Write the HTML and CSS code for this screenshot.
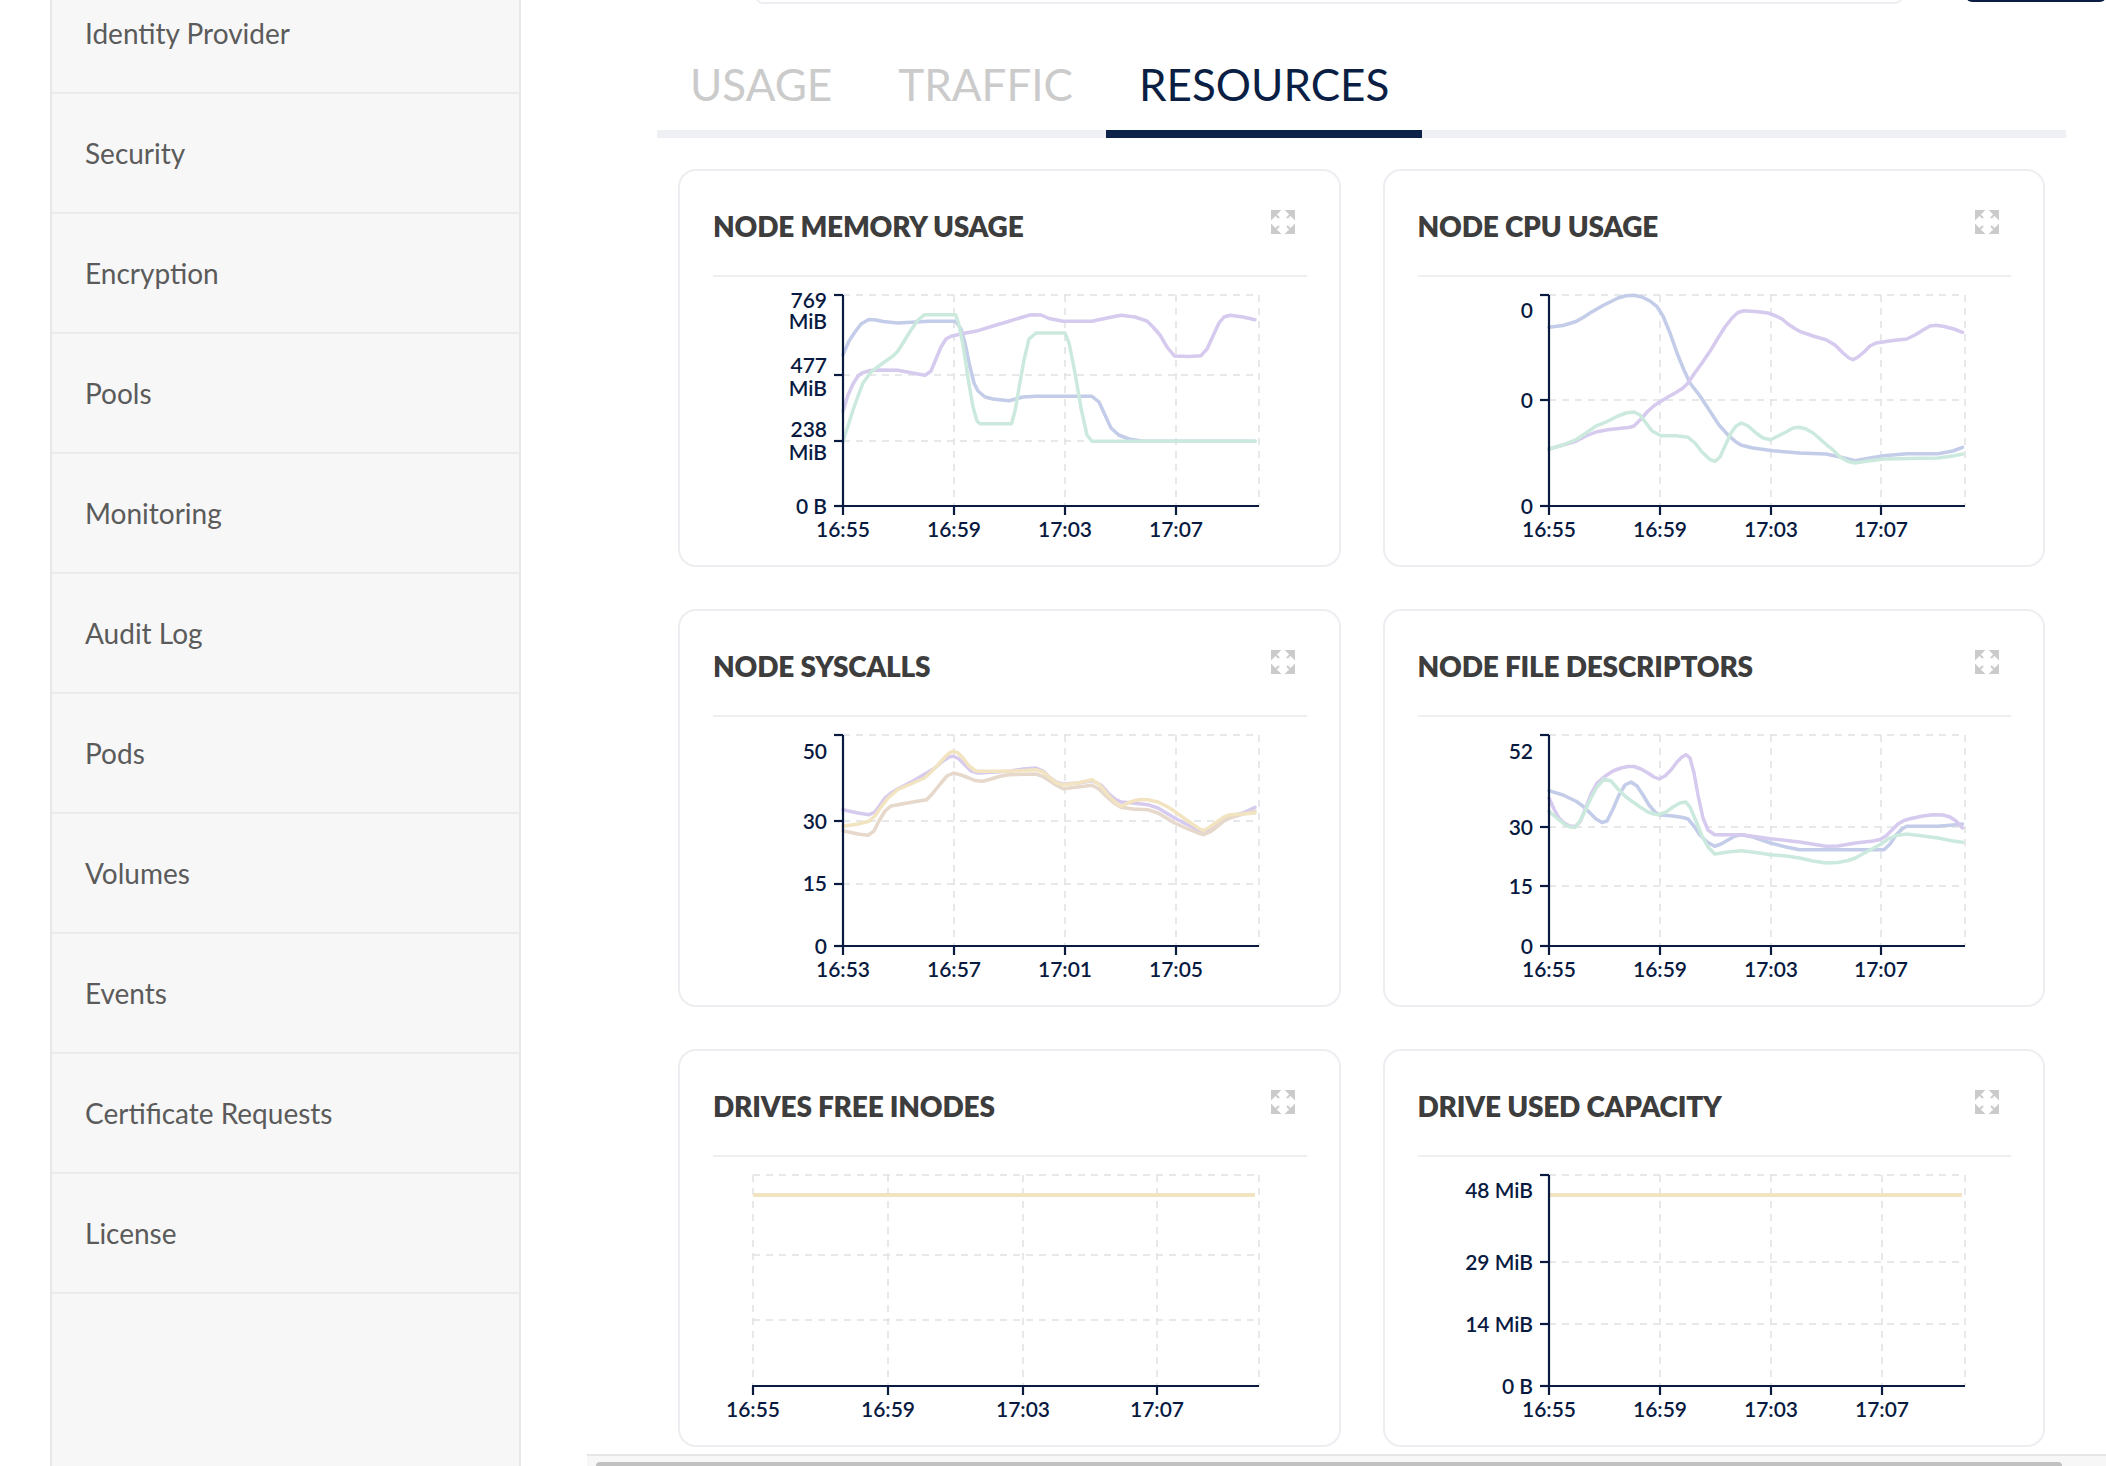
FILE: index.html
```html
<!DOCTYPE html>
<html lang="en">
<head>
<meta charset="utf-8">
<title>Tenant Metrics - Resources</title>
<link rel="stylesheet" href="styles.css">
</head>
<body>
<div class="page">
  <aside class="sidebar">
    <ul class="menu">
      <li class="menu-item">Identity Provider</li>
      <li class="menu-item">Security</li>
      <li class="menu-item">Encryption</li>
      <li class="menu-item">Pools</li>
      <li class="menu-item">Monitoring</li>
      <li class="menu-item">Audit Log</li>
      <li class="menu-item">Pods</li>
      <li class="menu-item">Volumes</li>
      <li class="menu-item">Events</li>
      <li class="menu-item">Certificate Requests</li>
      <li class="menu-item">License</li>
    </ul>
  </aside>

  <main class="main">
    <div class="topbar">
      <div class="search-box"></div>
      <div class="top-button"></div>
    </div>

    <div class="content">
      <nav class="tabs">
        <div class="tab">USAGE</div>
        <div class="tab">TRAFFIC</div>
        <div class="tab active">RESOURCES</div>
      </nav>

      <section class="cards">
        <!-- NODE MEMORY USAGE -->
        <article class="card">
          <header class="card-head">
            <h3 class="card-title">NODE MEMORY USAGE</h3>
            <svg class="expand" viewBox="0 0 24 24"><path d="M1 1h7l-7 7z M3 3l5 5 M23 1h-7l7 7z M21 3l-5 5 M1 23h7l-7-7z M3 21l5-5 M23 23h-7l7-7z M21 21l-5-5"/></svg>
          </header>
          <svg class="chart" viewBox="0 0 593 270">
            <g class="grid">
              <line x1="130" y1="12" x2="546" y2="12"/><line x1="130" y1="92" x2="546" y2="92"/><line x1="130" y1="158" x2="546" y2="158"/>
              <line x1="241" y1="12" x2="241" y2="223"/><line x1="352" y1="12" x2="352" y2="223"/><line x1="463" y1="12" x2="463" y2="223"/><line x1="546" y1="12" x2="546" y2="223"/>
            </g>
            <g class="series">
              <polyline class="s-blue" points="130,71.7 136,58 142,49 148,41 155.7,36.5 163,37 170,38.5 184.7,40 216,38.3 242.7,38.3 248,46 252,60 257,84 261,100 265,108 272,114 280,116 296,117.7 310,114 323,113.3 379,113.3 386,119 392,132 398,145 405.7,152 416,156 430,158.3 542,158.3"/>
              <polyline class="s-lav" points="130,128.3 135,112 140,101 145,93 149,90 157,87.5 165,87 184.7,87.3 205,91 212,92.3 218,88 223,76 228,64 233,56 238,53.3 250,50.5 265,47.7 280,43 296,38.3 310,34 318,31.7 328,32 336,35.5 350,38.3 379,38.3 394,35 408,32.3 422,34 434,38 440,44 447,52 454,64 461.5,73 476,73.5 488,72.7 494,66 500,53 506,40 511,34 517,32.3 530,34 542,36.7"/>
              <polyline class="s-mint" points="130,158.3 135,143 140,127 145,113 150,100 158,89 170,80 180,73 184.7,68.3 190,60 198,47 205,37 211.5,31.7 242.7,31.7 246,42 250,62 255,95 260,124 264,138 267,140.7 298.5,140.7 302,128 306,105 311,77 316,56 323,50 352,50 356,60 362,90 368,125 374,152 379,158.3 542,158.3"/>
            </g>
            <g class="axis">
              <line x1="130" y1="12" x2="130" y2="224"/><line x1="129" y1="223" x2="546" y2="223"/>
              <line x1="121" y1="12" x2="130" y2="12"/><line x1="121" y1="92" x2="130" y2="92"/><line x1="121" y1="158" x2="130" y2="158"/><line x1="121" y1="223" x2="130" y2="223"/>
              <line x1="130" y1="223" x2="130" y2="232"/><line x1="241" y1="223" x2="241" y2="232"/><line x1="352" y1="223" x2="352" y2="232"/><line x1="463" y1="223" x2="463" y2="232"/>
            </g>
            <g class="ylabels">
              <text x="114" y="25">769</text><text x="114" y="46">MiB</text>
              <text x="114" y="89.5">477</text><text x="114" y="112.5">MiB</text>
              <text x="114" y="154">238</text><text x="114" y="177">MiB</text>
              <text x="114" y="230.5">0 B</text>
            </g>
            <g class="xlabels">
              <text x="130" y="254">16:55</text><text x="241" y="254">16:59</text><text x="352" y="254">17:03</text><text x="463" y="254">17:07</text>
            </g>
          </svg>
        </article>

        <!-- NODE CPU USAGE -->
        <article class="card">
          <header class="card-head">
            <h3 class="card-title">NODE CPU USAGE</h3>
            <svg class="expand" viewBox="0 0 24 24"><path d="M1 1h7l-7 7z M3 3l5 5 M23 1h-7l7 7z M21 3l-5 5 M1 23h7l-7-7z M3 21l5-5 M23 23h-7l7-7z M21 21l-5-5"/></svg>
          </header>
          <svg class="chart" viewBox="0 0 593 270">
            <g class="grid">
              <line x1="131" y1="12" x2="547" y2="12"/><line x1="131" y1="117" x2="547" y2="117"/>
              <line x1="242" y1="12" x2="242" y2="223"/><line x1="353" y1="12" x2="353" y2="223"/><line x1="463" y1="12" x2="463" y2="223"/><line x1="547" y1="12" x2="547" y2="223"/>
            </g>
            <g class="series">
              <polyline class="s-blue" points="131,44.3 145,42.5 158,38.5 166,34 172,30 185,22.5 200,15 208,12.8 216,12.3 224,14 232,18 238.7,23.3 245,33 252,50 259,70 265.5,86 272,100 282,113 292,128.3 301,142 310,152 318,159 323.5,162.3 335,165 355,167.7 381.6,170 408,171 422,174 437,177.7 452,175 466,172.7 488.7,170.7 520,170.7 535,168 544.5,164.3"/>
              <polyline class="s-lav" points="131,166 145,162 158,158.3 168,153 178,149 189.6,146.7 205,145 211,144.5 216,143 223,136 230,128 237,122 243,118.3 250,114 258,109.5 265,105 270,100 276,91 284,80 292,68.3 300,55 307,44 314,35 320,29.5 326,27.7 340,28.7 350,30 358,33 364,36 370,41 376,45 381.6,48.3 395,53 408,56.7 417,62 425,70 431,75 435,76.7 440,74 446,69 452,63 458,60 465,59 475,57.5 488.7,56 497,52 505,47 512,43 518,42.3 526,43.5 536,46 544.5,49.3"/>
              <polyline class="s-mint" points="131,166 145,162 158,156.7 168,150 178,143 189.6,138.3 200,133 208,130 216,129 222,132 228,140 234,148 243,152.7 258,152.8 270,154.3 277,160 284,169 292,176.5 297,178.3 302,174 307,163 313,150 318,143 323.5,140 330,143 338,150 345,155 352.5,156.7 360,153 368,149 375,145 381.6,144.3 388,146 395,150 401,155 408,161.3 415,167 422,174 430,178.5 437,180 450,178 466,176 490,175.5 520,175 535,173 544.5,171"/>
            </g>
            <g class="axis">
              <line x1="131" y1="12" x2="131" y2="224"/><line x1="130" y1="223" x2="547" y2="223"/>
              <line x1="122" y1="12" x2="131" y2="12"/><line x1="122" y1="117" x2="131" y2="117"/><line x1="122" y1="223" x2="131" y2="223"/>
              <line x1="131" y1="223" x2="131" y2="232"/><line x1="242" y1="223" x2="242" y2="232"/><line x1="353" y1="223" x2="353" y2="232"/><line x1="463" y1="223" x2="463" y2="232"/>
            </g>
            <g class="ylabels">
              <text x="115" y="35">0</text>
              <text x="115" y="124.5">0</text>
              <text x="115" y="230.5">0</text>
            </g>
            <g class="xlabels">
              <text x="131" y="254">16:55</text><text x="242" y="254">16:59</text><text x="353" y="254">17:03</text><text x="463" y="254">17:07</text>
            </g>
          </svg>
        </article>

        <!-- NODE SYSCALLS -->
        <article class="card">
          <header class="card-head">
            <h3 class="card-title">NODE SYSCALLS</h3>
            <svg class="expand" viewBox="0 0 24 24"><path d="M1 1h7l-7 7z M3 3l5 5 M23 1h-7l7 7z M21 3l-5 5 M1 23h7l-7-7z M3 21l5-5 M23 23h-7l7-7z M21 21l-5-5"/></svg>
          </header>
          <svg class="chart" viewBox="0 0 593 270">
            <g class="grid">
              <line x1="130" y1="12" x2="546" y2="12"/><line x1="130" y1="98" x2="546" y2="98"/><line x1="130" y1="161" x2="546" y2="161"/>
              <line x1="241" y1="12" x2="241" y2="223"/><line x1="352" y1="12" x2="352" y2="223"/><line x1="463" y1="12" x2="463" y2="223"/><line x1="546" y1="12" x2="546" y2="223"/>
            </g>
            <g class="series">
              <polyline class="s-lav" points="130,86.7 145,90 156,91.7 162,89 167,82 172,75 178,70 184.7,66 200,58 213.7,50 222,45 230,38 236,34 240.5,33.3 246,36 252,42 258,48 265,50 296,48.3 310,46 323,45 330,48 336,54 343,59 350,61 365,60 379,57.7 388,62 395,70 402,76 408,79 420,80 434.7,81.7 445,85 455,91 461.5,95 475,102 484,106.5 490.5,108.3 497,106 505,100 512,95 518,93 530,90 542,84.3"/>
              <polyline class="s-tan" points="130,107.7 145,111 155,112.3 161,108 166,98 172,88 178,83 184.7,81.7 200,79 206,78 213.7,76.7 220,70 228,60 234,53 240.5,50 248,52 256,55 262,57.5 269.5,58.3 278,56 286,53.5 296,51.7 323,51 330,53.5 337,58 343,62 350,65.7 365,64 379,62.3 386,66 394,74 401,80 408,84.3 420,86 434.7,86.7 445,90 455,96 461.5,100 475,106 485,110 490.5,111.7 497,109 505,103 511,98 517,95 530,91 542,88.3"/>
              <polyline class="s-beige" points="130,103.3 145,101 155.7,98.3 162,93 168,84 175,75 184.7,66.7 200,60 211.5,55 218,49 225,42 232,34 237,29.5 240.5,28.3 245,30 250,35 256,43 262,47.5 265,48.3 296,48.3 323,46.7 330,49 337,55 343,59.5 350,61.7 365,60 379,56.7 387,62 395,72 402,79 408,83.3 415,80 422,77.5 428,76.5 434.7,76.7 445,79 455,84 461.5,88.3 475,98 485,105 490.5,107.7 497,104 505,98 511,94 517,91.7 530,91 542,90"/>
            </g>
            <g class="axis">
              <line x1="130" y1="12" x2="130" y2="224"/><line x1="129" y1="223" x2="546" y2="223"/>
              <line x1="121" y1="12" x2="130" y2="12"/><line x1="121" y1="98" x2="130" y2="98"/><line x1="121" y1="161" x2="130" y2="161"/><line x1="121" y1="223" x2="130" y2="223"/>
              <line x1="130" y1="223" x2="130" y2="232"/><line x1="241" y1="223" x2="241" y2="232"/><line x1="352" y1="223" x2="352" y2="232"/><line x1="463" y1="223" x2="463" y2="232"/>
            </g>
            <g class="ylabels">
              <text x="114" y="36">50</text>
              <text x="114" y="105.5">30</text>
              <text x="114" y="168">15</text>
              <text x="114" y="230.5">0</text>
            </g>
            <g class="xlabels">
              <text x="130" y="254">16:53</text><text x="241" y="254">16:57</text><text x="352" y="254">17:01</text><text x="463" y="254">17:05</text>
            </g>
          </svg>
        </article>

        <!-- NODE FILE DESCRIPTORS -->
        <article class="card">
          <header class="card-head">
            <h3 class="card-title">NODE FILE DESCRIPTORS</h3>
            <svg class="expand" viewBox="0 0 24 24"><path d="M1 1h7l-7 7z M3 3l5 5 M23 1h-7l7 7z M21 3l-5 5 M1 23h7l-7-7z M3 21l5-5 M23 23h-7l7-7z M21 21l-5-5"/></svg>
          </header>
          <svg class="chart" viewBox="0 0 593 270">
            <g class="grid">
              <line x1="131" y1="12" x2="547" y2="12"/><line x1="131" y1="104" x2="547" y2="104"/><line x1="131" y1="163" x2="547" y2="163"/>
              <line x1="242" y1="12" x2="242" y2="223"/><line x1="353" y1="12" x2="353" y2="223"/><line x1="463" y1="12" x2="463" y2="223"/><line x1="547" y1="12" x2="547" y2="223"/>
            </g>
            <g class="series">
              <polyline class="s-blue" points="131,67.7 145,72 158,78.3 166,84 172,90 178,96 184,99.5 189,98 195,86 201,72 207,62 213,59 219,63 225,72 231,82 237,89 241,91.7 255,93 265,94.5 270,96 276,103 282,112 289,119 296.7,123.3 303,121 310,117 317,113 323.5,111.7 335,114 352.5,120 368,124 381.6,126.7 466,126.7 472,121 478,112 484,106 488.7,103.3 520,103.3 535,102 544.5,101"/>
              <polyline class="s-lav" points="131,75 136,86 141,95 146,100 152,103 157,103.5 162,99 167,87 173,71 179,60 187,53.3 195,48 203,45 210,43.5 216,43.5 223,46 230,50 236,54 241,56 247,53 253,47 259,39 264,34 268,31.7 272,35 276,50 280,72 285,95 290,107 296.7,111.7 323.5,111.7 352.5,115.7 381.6,119 408,123.3 420,123 437.4,120 455,118 462,116.5 468,113 474,107 480,101 486,97.5 493,95.5 505,93 515,91.7 525,92 532,94 538,98 544.5,105"/>
              <polyline class="s-mint" points="131,88.3 140,96 146,101 152,104 157,104.3 162,98 167,88 173,75 179,64 186,56 193,58 200,66 207,73 214,78.3 222,84 230,89 236,91 241,91.7 248,89 255,84 262,80 267.7,79 272,84 278,98 284,113 290,124 296.7,131 310,129 323.5,127.7 338,129.5 352.5,131.7 368,133 381.6,135 395,138 408,140 420,139.5 430,137.5 437.4,135 450,128 462,121.7 470,116 478,112.5 488.7,111 505,113 520,115 535,118 544.5,119.3"/>
            </g>
            <g class="axis">
              <line x1="131" y1="12" x2="131" y2="224"/><line x1="130" y1="223" x2="547" y2="223"/>
              <line x1="122" y1="12" x2="131" y2="12"/><line x1="122" y1="104" x2="131" y2="104"/><line x1="122" y1="163" x2="131" y2="163"/><line x1="122" y1="223" x2="131" y2="223"/>
              <line x1="131" y1="223" x2="131" y2="232"/><line x1="242" y1="223" x2="242" y2="232"/><line x1="353" y1="223" x2="353" y2="232"/><line x1="463" y1="223" x2="463" y2="232"/>
            </g>
            <g class="ylabels">
              <text x="115" y="36">52</text>
              <text x="115" y="111.5">30</text>
              <text x="115" y="170.5">15</text>
              <text x="115" y="230.5">0</text>
            </g>
            <g class="xlabels">
              <text x="131" y="254">16:55</text><text x="242" y="254">16:59</text><text x="353" y="254">17:03</text><text x="463" y="254">17:07</text>
            </g>
          </svg>
        </article>

        <!-- DRIVES FREE INODES -->
        <article class="card">
          <header class="card-head">
            <h3 class="card-title">DRIVES FREE INODES</h3>
            <svg class="expand" viewBox="0 0 24 24"><path d="M1 1h7l-7 7z M3 3l5 5 M23 1h-7l7 7z M21 3l-5 5 M1 23h7l-7-7z M3 21l5-5 M23 23h-7l7-7z M21 21l-5-5"/></svg>
          </header>
          <svg class="chart" viewBox="0 0 593 270">
            <g class="grid">
              <line x1="40" y1="12" x2="546" y2="12"/><line x1="40" y1="92" x2="546" y2="92"/><line x1="40" y1="157" x2="546" y2="157"/>
              <line x1="40" y1="12" x2="40" y2="223"/><line x1="175" y1="12" x2="175" y2="223"/><line x1="310" y1="12" x2="310" y2="223"/><line x1="444" y1="12" x2="444" y2="223"/><line x1="546" y1="12" x2="546" y2="223"/>
            </g>
            <g class="series">
              <polyline class="s-beige flat" points="40,32 542,32"/>
            </g>
            <g class="axis">
              <line x1="39" y1="223" x2="546" y2="223"/>
              <line x1="40" y1="223" x2="40" y2="232"/><line x1="175" y1="223" x2="175" y2="232"/><line x1="310" y1="223" x2="310" y2="232"/><line x1="444" y1="223" x2="444" y2="232"/>
            </g>
            <g class="xlabels">
              <text x="40" y="254">16:55</text><text x="175" y="254">16:59</text><text x="310" y="254">17:03</text><text x="444" y="254">17:07</text>
            </g>
          </svg>
        </article>

        <!-- DRIVE USED CAPACITY -->
        <article class="card">
          <header class="card-head">
            <h3 class="card-title">DRIVE USED CAPACITY</h3>
            <svg class="expand" viewBox="0 0 24 24"><path d="M1 1h7l-7 7z M3 3l5 5 M23 1h-7l7 7z M21 3l-5 5 M1 23h7l-7-7z M3 21l5-5 M23 23h-7l7-7z M21 21l-5-5"/></svg>
          </header>
          <svg class="chart" viewBox="0 0 593 270">
            <g class="grid">
              <line x1="131" y1="12" x2="547" y2="12"/><line x1="131" y1="99" x2="547" y2="99"/><line x1="131" y1="161" x2="547" y2="161"/>
              <line x1="242" y1="12" x2="242" y2="223"/><line x1="353" y1="12" x2="353" y2="223"/><line x1="464" y1="12" x2="464" y2="223"/><line x1="547" y1="12" x2="547" y2="223"/>
            </g>
            <g class="series">
              <polyline class="s-beige flat" points="131,32 544,32"/>
            </g>
            <g class="axis">
              <line x1="131" y1="12" x2="131" y2="224"/><line x1="130" y1="223" x2="547" y2="223"/>
              <line x1="122" y1="12" x2="131" y2="12"/><line x1="122" y1="99" x2="131" y2="99"/><line x1="122" y1="161" x2="131" y2="161"/><line x1="122" y1="223" x2="131" y2="223"/>
              <line x1="131" y1="223" x2="131" y2="232"/><line x1="242" y1="223" x2="242" y2="232"/><line x1="353" y1="223" x2="353" y2="232"/><line x1="464" y1="223" x2="464" y2="232"/>
            </g>
            <g class="ylabels">
              <text x="115" y="35">48 MiB</text>
              <text x="115" y="106.5">29 MiB</text>
              <text x="115" y="168.5">14 MiB</text>
              <text x="115" y="230.5">0 B</text>
            </g>
            <g class="xlabels">
              <text x="131" y="254">16:55</text><text x="242" y="254">16:59</text><text x="353" y="254">17:03</text><text x="464" y="254">17:07</text>
            </g>
          </svg>
        </article>
      </section>
    </div>

    <div class="hscroll"><div class="hscroll-thumb"></div></div>
  </main>
</div>
</body>
</html>
```

FILE: styles.css
```css
* {
  box-sizing: border-box;
}

html, body {
  margin: 0;
  padding: 0;
  height: 100%;
  overflow: hidden;
  background: #ffffff;
  font-family: Lato, "Noto Sans", "Liberation Sans", sans-serif;
}

.page {
  display: flex;
  height: 1466px;
}

/* ---------- Sidebar ---------- */
.sidebar {
  flex: 0 0 471px;
  margin-left: 50px;
  background: #f7f7f7;
  border-left: 2px solid #e8e8e8;
  border-right: 2px solid #e8e8e8;
  overflow: hidden;
}

.menu {
  list-style: none;
  margin: -26px 0 0 0;
  padding: 0;
}

.menu-item {
  height: 120px;
  display: flex;
  align-items: center;
  padding-left: 33px;
  border-bottom: 2px solid #ebebeb;
  font-size: 28px;
  color: #5b5b5b;
}

/* ---------- Main ---------- */
.main {
  flex: 1 1 auto;
  margin-left: 66px;
  display: flex;
  flex-direction: column;
  min-width: 0;
}

.topbar {
  display: flex;
  height: 60px;
  margin-top: -54px;
  padding-left: 168px;
}

.search-box {
  width: 1160px;
  border: 2px solid #eceef2;
  border-radius: 8px;
  background: #ffffff;
}

.top-button {
  align-self: flex-start;
  margin-left: 63px;
  width: 140px;
  height: 56px;
  background: #0b1d44;
  border-radius: 6px;
  flex: 0 0 auto;
}

.content {
  padding: 0 40px 0 70px;
}

/* ---------- Tabs ---------- */
.tabs {
  display: flex;
  margin-top: 54px;
  border-bottom: 8px solid #eef0f4;
}

.tab {
  padding: 0 33px 19px;
  margin-bottom: -8px;
  border-bottom: 8px solid transparent;
  font-size: 44px;
  line-height: 53px;
  color: #cbcbcb;
}

.tab.active {
  color: #0b1f45;
  border-bottom-color: #0d2249;
}

/* ---------- Cards ---------- */
.cards {
  display: grid;
  grid-template-columns: 1fr 1fr;
  gap: 42px;
  padding: 31px 21px 0;
}

.card {
  height: 398px;
  border: 2px solid #eceef1;
  border-radius: 18px;
  padding: 0 32px 12px 33px;
  background: #ffffff;
}

.card-head {
  display: flex;
  justify-content: space-between;
  align-items: flex-start;
  padding: 39px 0 33px;
  border-bottom: 2px solid #eeeff1;
}

.card-title {
  margin: 0;
  font-size: 28px;
  line-height: 32px;
  font-weight: 800;
  color: #3d3d3d;
  letter-spacing: -0.2px;
}

.expand {
  width: 24px;
  height: 24px;
  margin-top: 0;
  margin-right: 12px;
  fill: #cbcbcb;
  stroke: #cbcbcb;
  stroke-width: 2;
}

.chart {
  display: block;
  width: 593px;
  height: 270px;
  margin-top: 6px;
  overflow: visible;
}

.grid line {
  stroke: #e0e1e4;
  stroke-width: 1.5;
  stroke-dasharray: 7 6;
}

.axis line {
  stroke: #0b1b3f;
  stroke-width: 2.2;
}

.series polyline {
  fill: none;
  stroke-width: 3.5;
  stroke-linejoin: round;
  stroke-linecap: round;
}

.s-blue { stroke: #c3cce8; }
.s-lav { stroke: #d6caee; }
.s-mint { stroke: #cbeadd; }
.s-beige { stroke: #f2e4c0; }
.s-tan { stroke: #e6d8ca; }
.series .flat { stroke-width: 4; stroke-linecap: butt; }

.ylabels text,
.xlabels text {
  font-family: Lato, "Noto Sans", "Liberation Sans", sans-serif;
  font-size: 21px;
  font-weight: 600;
  fill: #081a3f;
}

.ylabels text {
  text-anchor: end;
}

.xlabels text {
  text-anchor: middle;
}

/* ---------- Bottom scrollbar ---------- */
.hscroll {
  margin-top: 7px;
  height: 12px;
  border-top: 2px solid #e6e6e6;
  background: #f7f7f7;
  padding: 6px 44px 0 9px;
}

.hscroll-thumb {
  height: 8px;
  border-radius: 4px;
  background: #c1c1c1;
}
```
